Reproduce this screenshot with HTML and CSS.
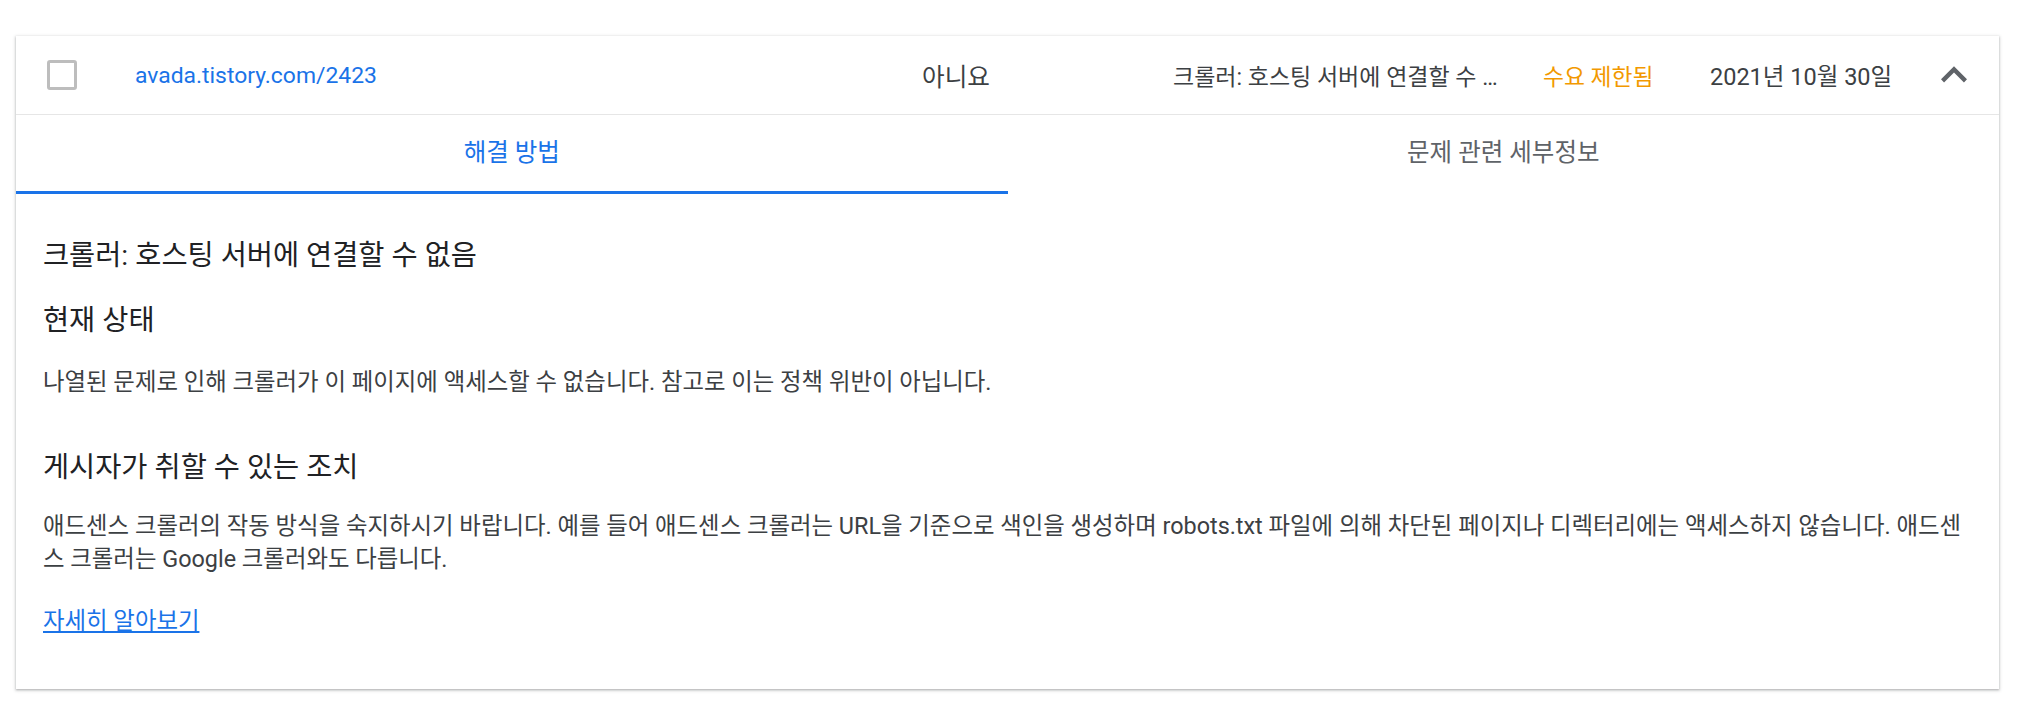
FILE: index.html
```html
<!DOCTYPE html>
<html lang="ko">
<head>
    <meta charset="UTF-8">
    <meta name="viewport" content="width=device-width, initial-scale=1.0">
    <title>사이트 문제</title>
    <link rel="stylesheet" href="styles.css">
</head>
<body>

<div class="page">
    <div class="card">
        <div class="row">
            <span class="cell"><span class="checkbox"></span></span>
            <a class="cell url" href="#">avada.tistory.com/2423</a>
            <span class="cell ads">아니요</span>
            <span class="cell issue" title="크롤러: 호스팅 서버에 연결할 수 없음">크롤러: 호스팅 서버에 연결할 수 없음</span>
            <span class="cell status">수요 제한됨</span>
            <span class="cell date">2021년 10월 30일</span>
            <span class="cell toggle">
                <svg viewBox="0 0 24 24" width="52" height="52"><path d="M12 8l-6 6 1.41 1.41L12 10.83l4.59 4.58L18 14z" fill="#5f6368"/></svg>
            </span>
        </div>

        <div class="tabs">
            <div class="tab active">해결 방법</div>
            <div class="tab">문제 관련 세부정보</div>
        </div>

        <div class="panel">
            <h2 class="panel-title">크롤러: 호스팅 서버에 연결할 수 없음</h2>

            <h3 class="section-title">현재 상태</h3>
            <p class="section-text">나열된 문제로 인해 크롤러가 이 페이지에 액세스할 수 없습니다. 참고로 이는 정책 위반이 아닙니다.</p>

            <h3 class="section-title gap">게시자가 취할 수 있는 조치</h3>
            <p class="section-text tight">애드센스 크롤러의 작동 방식을 숙지하시기 바랍니다. 예를 들어 애드센스 크롤러는 URL을 기준으로 색인을 생성하며 robots.txt 파일에 의해 차단된 페이지나 디렉터리에는 액세스하지 않습니다. 애드센스 크롤러는 Google 크롤러와도 다릅니다.</p>

            <a class="learn-more" href="#">자세히 알아보기</a>
        </div>
    </div>
</div>

</body>
</html>
```

FILE: styles.css
```css
body {
    margin: 0;
    background-color: #fff;
    font-family: Roboto, "Noto Sans CJK KR", sans-serif;
    color: #3c4043;
}
.page {
    padding: 36px 26px 24px 16px;
}
.card {
    background-color: #fff;
    box-shadow: 0 1px 2px rgba(60, 64, 67, 0.3), 0 1px 3px 1px rgba(60, 64, 67, 0.15);
}

/* summary row */
.row {
    display: grid;
    grid-template-columns: 88px 787px 251px 370px 167px 218px 52px;
    align-items: center;
    height: 78px;
    padding-left: 31px;
    border-bottom: 1px solid #e6e6e6;
}
.cell {
    white-space: nowrap;
}
.checkbox {
    display: block;
    width: 24px;
    height: 24px;
    border: 3px solid #bdbdbd;
    border-radius: 3px;
}
.url {
    font-size: 22.9px;
    color: #1a73e8;
    text-decoration: none;
}
.ads {
    font-size: 24.6px;
    color: #3c4043;
}
.issue {
    width: 335px;
    overflow: hidden;
    text-overflow: ellipsis;
    font-size: 23px;
    color: #3c4043;
}
.status {
    font-size: 22.8px;
    color: #f29900;
}
.date {
    font-size: 23.5px;
    color: #3c4043;
}
.toggle svg {
    display: block;
}

/* tabs */
.tabs {
    display: grid;
    grid-template-columns: 1fr 1fr;
}
.tab {
    height: 76px;
    line-height: 76px;
    border-bottom: 3px solid transparent;
    text-align: center;
    font-size: 24.5px;
    color: #5f6368;
}
.tab.active {
    color: #1a73e8;
    border-bottom-color: #1a73e8;
}

/* solution panel */
.panel {
    padding: 44px 24px 51px 27px;
}
.panel-title {
    margin: 0;
    font-size: 28.4px;
    line-height: 36px;
    font-weight: 400;
    color: #202124;
}
.section-title {
    margin: 29px 0 0;
    font-size: 28.4px;
    line-height: 36px;
    font-weight: 400;
    color: #202124;
}
.section-title.gap {
    margin-top: 51px;
}
.section-text {
    margin: 27px 0 0;
    font-size: 23.4px;
    line-height: 33px;
    color: #3c4043;
}
.section-text.tight {
    margin-top: 24px;
}
.learn-more {
    display: inline-block;
    margin-top: 29px;
    font-size: 23.4px;
    line-height: 33px;
    color: #1a73e8;
}
```
